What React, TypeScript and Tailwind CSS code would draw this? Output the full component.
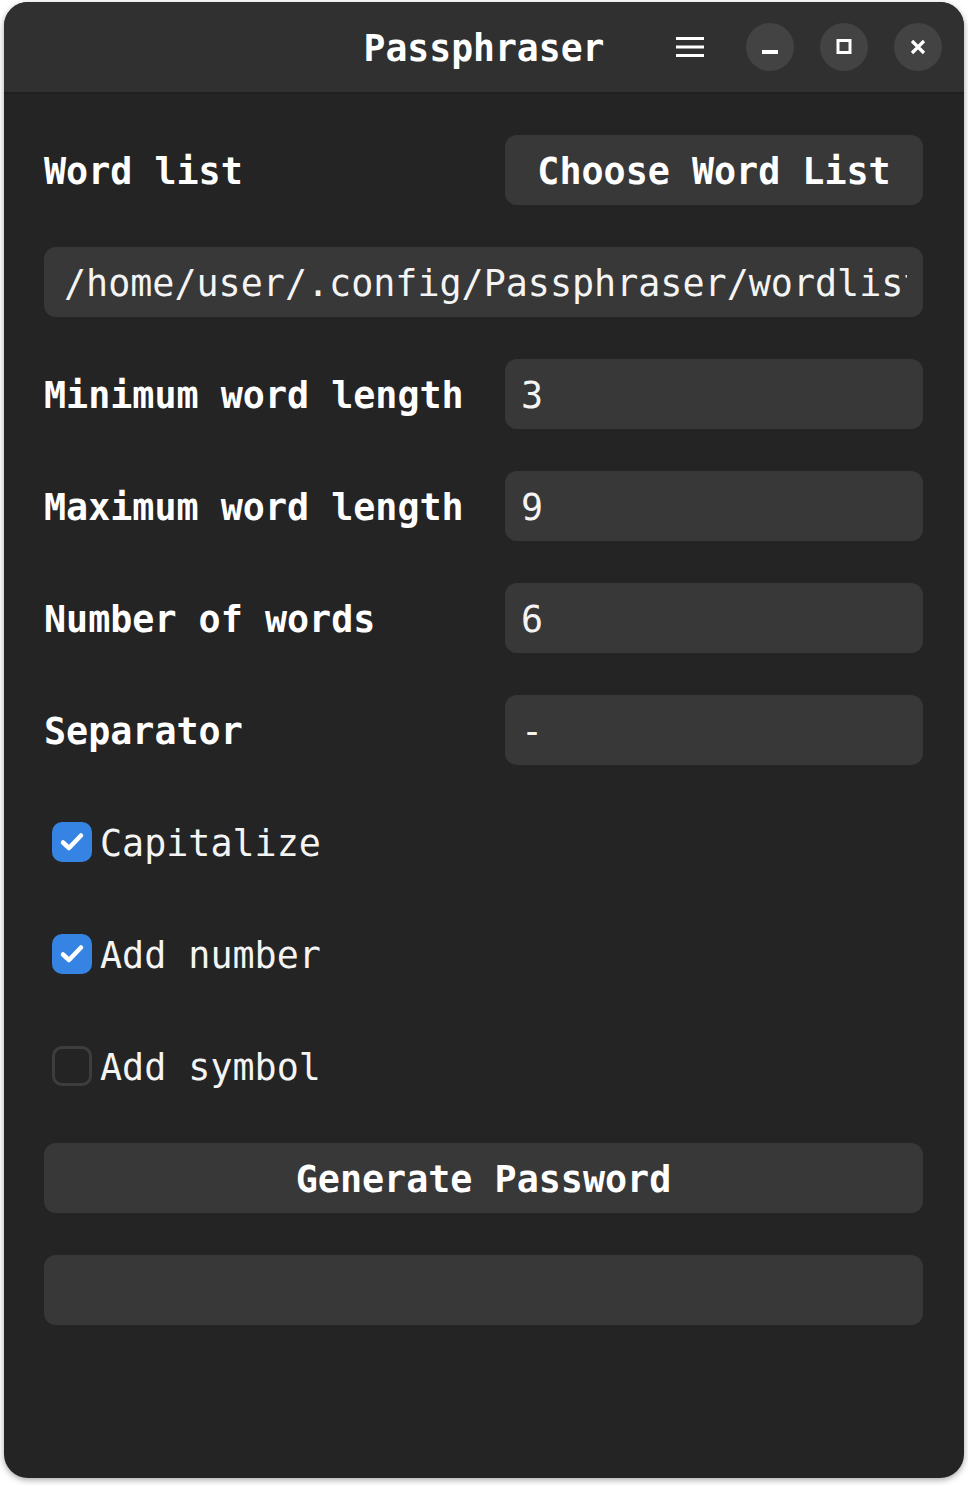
import React from "react";

const mono = { fontFamily: '"DejaVu Sans Mono", "Liberation Mono", monospace' };

function Check({ checked }: { checked: boolean }) {
  return checked ? (
    <div className="w-[40px] h-[40px] rounded-[10px] bg-[#3584e4] flex items-center justify-center">
      <svg width="30" height="30" viewBox="0 0 30 30" fill="none">
        <path d="M6 15.5 L12 21 L24 8.5" stroke="white" strokeWidth="4.5" strokeLinecap="round" strokeLinejoin="round" />
      </svg>
    </div>
  ) : (
    <div className="w-[40px] h-[40px] rounded-[10px] border-[3px] border-[#3d3d3d] bg-transparent" />
  );
}

function Entry({ value, className = "", pad = "px-[20px]" }: { value: string; className?: string; pad?: string }) {
  return (
    <div className={`h-[70px] rounded-[12px] bg-[#383838] flex items-center ${pad} pt-[4px] text-[#f4f4f4] ${className}`}>
      <div className="overflow-hidden whitespace-nowrap flex-1 leading-[1.4]">{value}</div>
    </div>
  );
}

function Row({ label, value }: { label: string; value: string }) {
  return (
    <div className="flex items-center h-[70px]">
      <div className="flex-1 font-bold text-white pt-[4px]">{label}</div>
      <Entry value={value} className="w-[418px]" pad="px-[16px]" />
    </div>
  );
}

function CheckRow({ label, checked }: { label: string; checked: boolean }) {
  return (
    <div className="flex items-center h-[70px] pl-[8px] gap-[8px]">
      <Check checked={checked} />
      <span className="text-[#f4f4f4] pt-[4px]">{label}</span>
    </div>
  );
}

export default function App() {
  return (
    <div className="w-[968px] h-[1487px] bg-white" style={mono}>
      <div className="pt-[2px] pl-[4px]">
        <div className="w-[960px] h-[1476px] rounded-[24px] overflow-hidden bg-[#242424] flex flex-col shadow-[0_2px_6px_rgba(0,0,0,0.35)] text-[36.7px] leading-none">
          <div className="h-[92px] bg-[#303030] grid grid-cols-[1fr_auto_1fr] items-center border-b-[2px] border-[#1f1f1f] shrink-0">
            <div />
            <div className="font-bold text-white text-[36.4px] pt-[4px]">Passphraser</div>
            <div className="flex items-center justify-end pr-[22px]">
              <div className="w-[48px] h-[48px] flex items-center justify-center mr-[32px]">
                <svg width="30" height="26" viewBox="0 0 30 26">
                  <rect x="1" y="3" width="28" height="3" fill="white" />
                  <rect x="1" y="11.5" width="28" height="3" fill="white" />
                  <rect x="1" y="20" width="28" height="3" fill="white" />
                </svg>
              </div>
              <div className="w-[48px] h-[48px] rounded-full bg-[#434343] flex items-center justify-center">
                <svg width="20" height="20" viewBox="0 0 20 20">
                  <rect x="2" y="13" width="16" height="4" fill="white" />
                </svg>
              </div>
              <div className="w-[48px] h-[48px] rounded-full bg-[#434343] flex items-center justify-center ml-[26px]">
                <svg width="20" height="20" viewBox="0 0 20 20">
                  <rect x="4" y="3.5" width="12" height="12" fill="none" stroke="white" strokeWidth="3" />
                </svg>
              </div>
              <div className="w-[48px] h-[48px] rounded-full bg-[#434343] flex items-center justify-center ml-[26px]">
                <svg width="20" height="20" viewBox="0 0 20 20">
                  <path d="M4 4 L16 16 M16 4 L4 16" stroke="white" strokeWidth="3.2" strokeLinecap="butt" />
                </svg>
              </div>
            </div>
          </div>
          <div className="flex flex-col gap-[42px] pt-[41px] pl-[40px] pr-[41px]">
            <div className="flex items-center h-[70px]">
              <div className="flex-1 font-bold text-white pt-[4px]">Word list</div>
              <div className="w-[418px] h-[70px] rounded-[12px] bg-[#383838] flex items-center justify-center font-bold text-white pt-[4px]">
                Choose Word List
              </div>
            </div>
            <Entry value="/home/user/.config/Passphraser/wordlist.txt" pad="pl-[20px] pr-[16px]" />
            <Row label="Minimum word length" value="3" />
            <Row label="Maximum word length" value="9" />
            <Row label="Number of words" value="6" />
            <Row label="Separator" value="-" />
            <CheckRow label="Capitalize" checked={true} />
            <CheckRow label="Add number" checked={true} />
            <CheckRow label="Add symbol" checked={false} />
            <div className="h-[70px] rounded-[12px] bg-[#383838] flex items-center justify-center font-bold text-white pt-[4px]">
              Generate Password
            </div>
            <Entry value="" />
          </div>
        </div>
      </div>
    </div>
  );
}
